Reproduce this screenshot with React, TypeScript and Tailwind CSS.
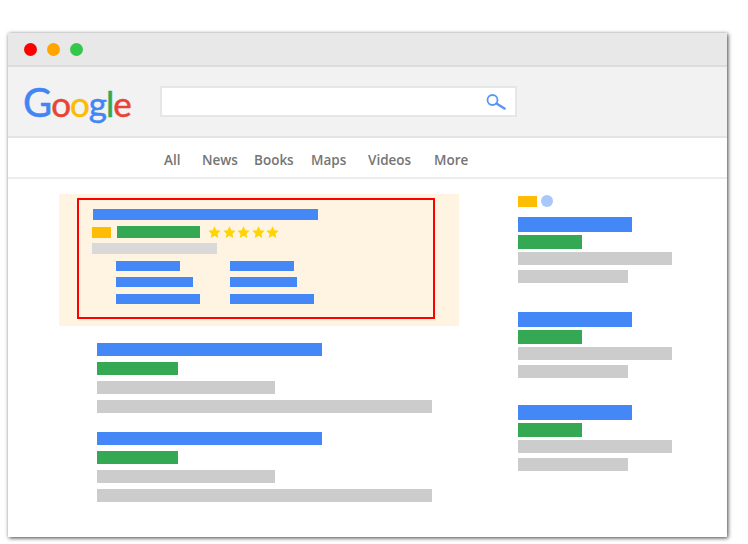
import React from "react";

function Bar({ className }: { className: string }) {
  return <div className={className} />;
}

function Star() {
  return (
    <svg width="13" height="12" viewBox="0 0 24 23" className="shrink-0">
      <path d="M12 0.5l3.5 7.6 8.2 1-6 5.7 1.6 8.2L12 18.900l-7.300 4.100 1.600-8.200-6-5.700 8.200-1z" fill="#ffd400" />
    </svg>
  );
}

function LeftResult() {
  return (
    <div className="flex flex-col gap-[6px]">
      <Bar className="h-[13px] w-[225px] bg-[#4487f7]" />
      <Bar className="h-[13px] w-[81px] bg-[#34a853]" />
      <Bar className="h-[13px] w-[178px] bg-[#cccccc]" />
      <Bar className="h-[13px] w-[335px] bg-[#cccccc]" />
    </div>
  );
}

function RightResult() {
  return (
    <div className="flex flex-col">
      <Bar className="h-[15px] w-[114px] bg-[#4487f7]" />
      <Bar className="mt-[3px] h-[14px] w-[64px] bg-[#34a853]" />
      <Bar className="mt-[3px] h-[13px] w-[154px] bg-[#cccccc]" />
      <Bar className="mt-[5px] h-[13px] w-[110px] bg-[#cccccc]" />
    </div>
  );
}

const navItems = [
  { label: "All", width: "w-[38px]" },
  { label: "News", width: "w-[52px]" },
  { label: "Books", width: "w-[57px]" },
  { label: "Maps", width: "w-[57px]" },
  { label: "Videos", width: "w-[66px]" },
  { label: "More", width: "w-[40px]" },
];

export default function App() {
  return (
    <div className="h-[544px] w-[748px] overflow-hidden bg-white pl-[8px] pt-[33px]">
      <div className="flex h-[504px] w-[719px] flex-col bg-white shadow-[1px_1px_4px_rgba(0,0,0,0.75)]">
        {/* title bar */}
        <div className="flex h-[34px] items-center gap-[10px] border-b-2 border-[#dcdcdc] bg-[#e8e8e8] pl-[16px] pt-[1px]">
          <div className="h-[13px] w-[13px] rounded-full bg-[#ff0000]" />
          <div className="h-[13px] w-[13px] rounded-full bg-[#ffa500]" />
          <div className="h-[13px] w-[13px] rounded-full bg-[#34c84a]" />
        </div>

        {/* search row */}
        <div className="flex h-[71px] items-center border-b-2 border-[#e4e4e4] bg-[#f2f2f2] pl-[15px]">
          <div className="w-[137px] font-['Lato',sans-serif] text-[35px] leading-none tracking-[-1px] [-webkit-text-stroke:0.5px]">
            <span className="text-[40px] tracking-[-1px] text-[#4285f4]">G</span>
            <span className="text-[#ea4335]">o</span>
            <span className="text-[#fbbc05]">o</span>
            <span className="text-[#4285f4]">g</span>
            <span className="text-[#34a853]">l</span>
            <span className="text-[#ea4335]">e</span>
          </div>
          <div className="flex h-[31px] w-[357px] items-center justify-end border-2 border-[#e6e6e6] bg-white pr-[9px]">
            <svg width="20" height="16" viewBox="0 0 20 16" fill="none" stroke="#5a96f5">
              <circle cx="6.500" cy="6" r="5" strokeWidth="1.800" />
              <path d="M10.500 9.500L18.500 14.500" strokeWidth="2.600" strokeLinecap="round" />
            </svg>
          </div>
        </div>

        {/* nav */}
        <div className="flex h-[41px] items-center border-b-2 border-[#ececec] pl-[156px] pt-[5px] font-['Open_Sans',sans-serif] text-[13.5px] font-semibold text-[#757575]">
          {navItems.map((item) => (
            <span key={item.label} className={item.width}>
              {item.label}
            </span>
          ))}
        </div>

        {/* results */}
        <div className="flex flex-1 pt-[15px]">
          <div className="flex w-[459px] flex-col pl-[51px]">
            <div className="h-[132px] w-[400px] bg-[#fff3e2] pl-[18px] pt-[4px]">
              <div className="flex h-[121px] w-[358px] flex-col border-2 border-[#ff0000] pl-[13px] pt-[9px]">
                <Bar className="ml-[1px] h-[11px] w-[225px] bg-[#4487f7]" />
                <div className="mt-[6px] flex items-center">
                  <Bar className="h-[11px] w-[19px] bg-[#ffbc05]" />
                  <Bar className="ml-[6px] h-[12px] w-[83px] bg-[#34a853]" />
                  <div className="ml-[8px] flex gap-[1.5px]">
                    <Star />
                    <Star />
                    <Star />
                    <Star />
                    <Star />
                  </div>
                </div>
                <Bar className="mt-[5px] h-[11px] w-[125px] bg-[#d9d9d9]" />
                <div className="mt-[7px] flex pl-[24px]">
                  <div className="flex w-[114px] flex-col">
                    <Bar className="h-[10px] w-[64px] bg-[#4487f7]" />
                    <Bar className="mt-[6px] h-[10px] w-[77px] bg-[#4487f7]" />
                    <Bar className="mt-[7px] h-[10px] w-[84px] bg-[#4487f7]" />
                  </div>
                  <div className="flex flex-col">
                    <Bar className="h-[10px] w-[64px] bg-[#4487f7]" />
                    <Bar className="mt-[6px] h-[10px] w-[67px] bg-[#4487f7]" />
                    <Bar className="mt-[7px] h-[10px] w-[84px] bg-[#4487f7]" />
                  </div>
                </div>
              </div>
            </div>
            <div className="ml-[38px] mt-[17px] flex flex-col gap-[19px]">
              <LeftResult />
              <LeftResult />
            </div>
          </div>

          <div className="flex flex-col pl-[51px] pt-[1px]">
            <div className="flex items-center gap-[4px]">
              <Bar className="h-[11px] w-[19px] bg-[#ffbc05]" />
              <Bar className="h-[12px] w-[12px] rounded-full bg-[#a8c7fa]" />
            </div>
            <div className="mt-[10px] flex flex-col">
              <RightResult />
              <div className="mt-[29px]">
                <RightResult />
              </div>
              <div className="mt-[27px]">
                <RightResult />
              </div>
            </div>
          </div>
        </div>
      </div>
    </div>
  );
}
